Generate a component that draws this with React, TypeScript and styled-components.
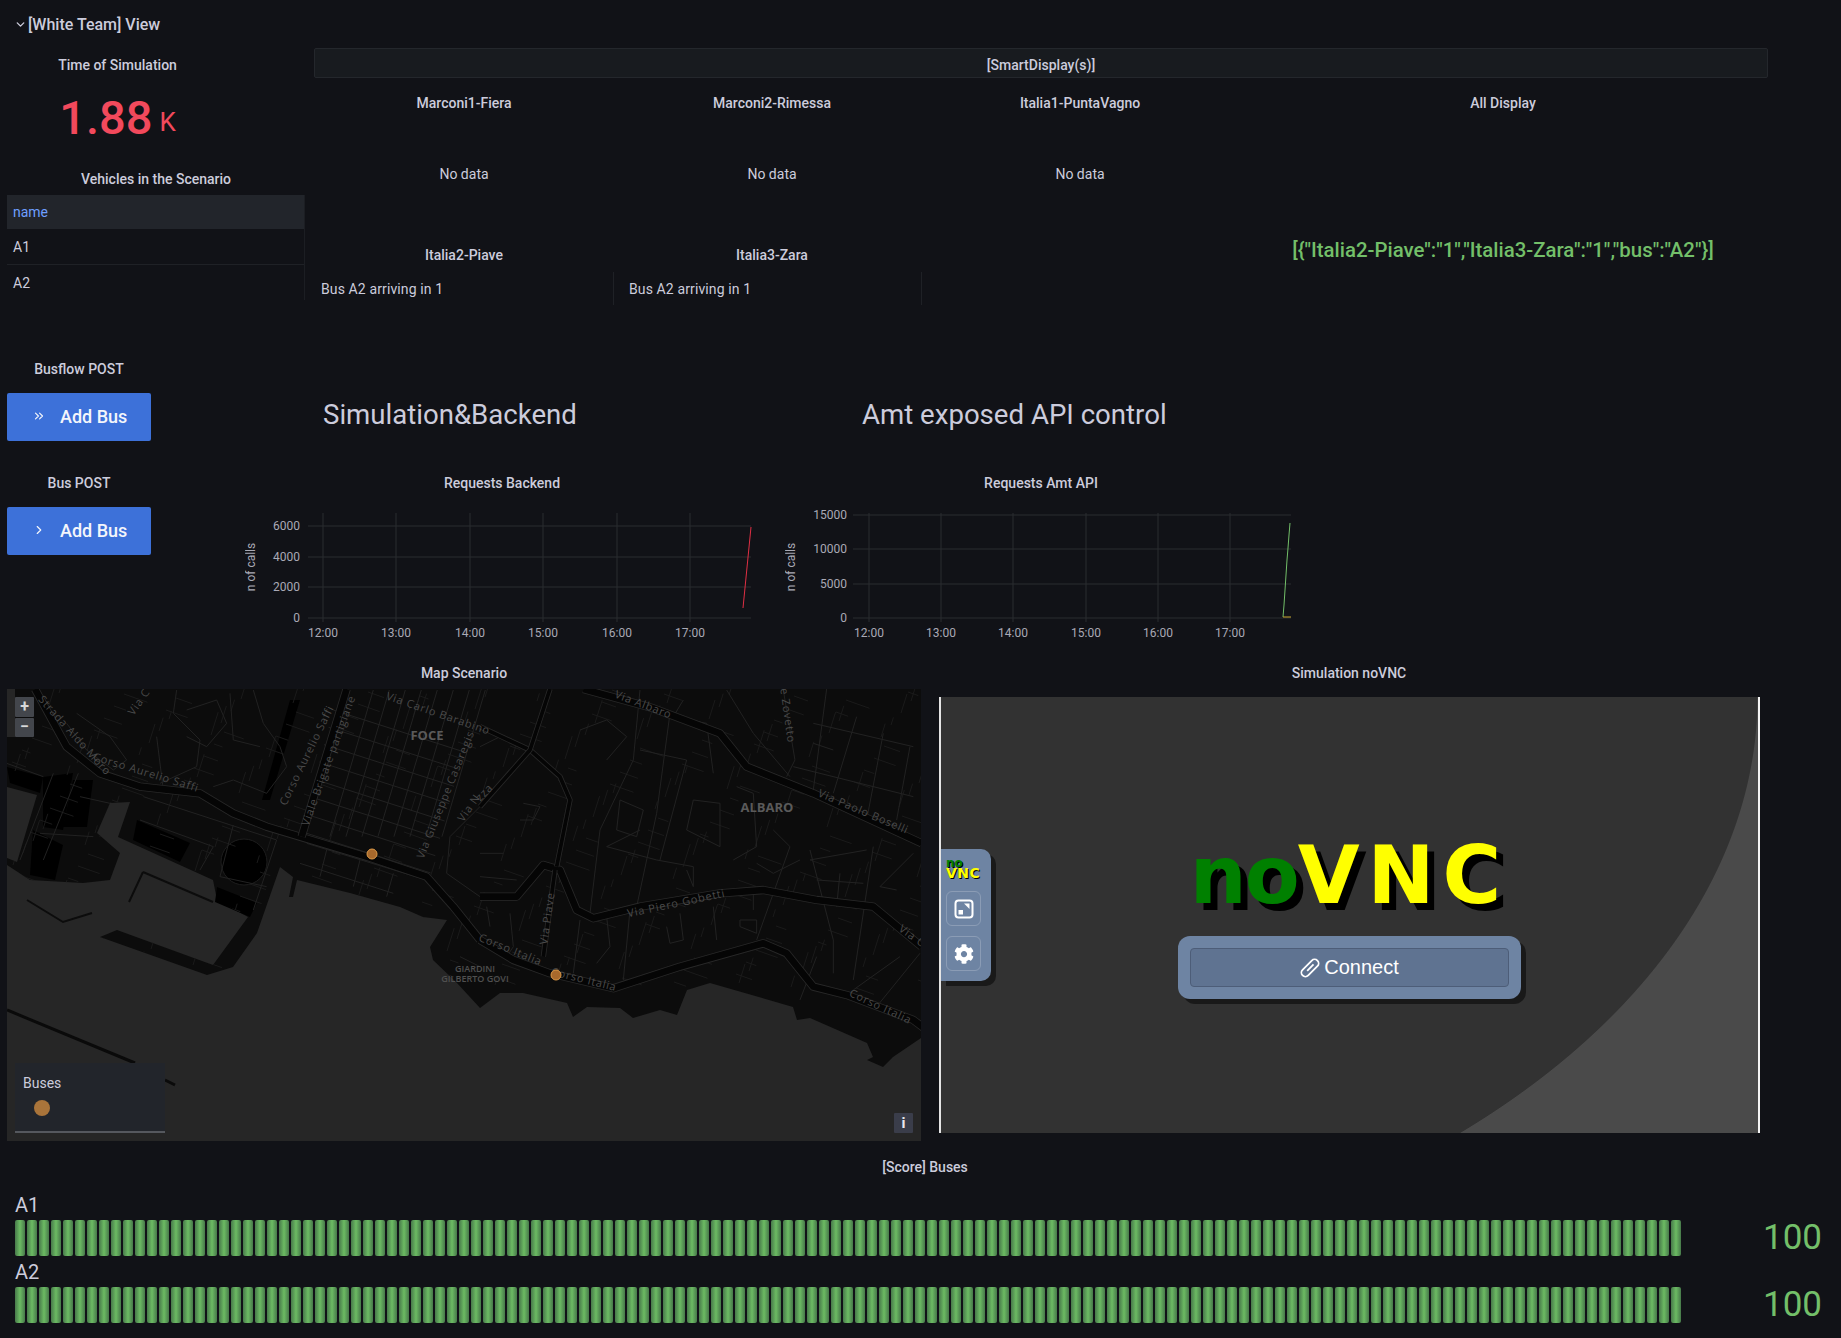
import React from "react";
import styled, { createGlobalStyle } from "styled-components";
import { ChevronDown, ChevronRight, ChevronsRight } from "lucide-react";
import { FaCog } from "react-icons/fa";

const GlobalStyle = createGlobalStyle`
  html, body {
    margin: 0;
    padding: 0;
    background: #111217;
  }
  * {
    box-sizing: border-box;
  }
`;

const Page = styled.div`
  width: 1841px;
  height: 1338px;
  overflow: hidden;
  background: #111217;
  color: #ccccdc;
  font-family: Roboto, "Liberation Sans", sans-serif;
  font-size: 14px;
`;

const RowHeader = styled.div`
  height: 48px;
  padding-left: 14px;
  display: flex;
  align-items: center;
  font-size: 16px;
  font-weight: 500;
  & > svg {
    margin-right: 1px;
  }
`;

const PanelTitle = styled.div`
  height: 34px;
  display: flex;
  align-items: center;
  justify-content: center;
  font-weight: 500;
  font-size: 14px;
  white-space: nowrap;
`;

const TopSection = styled.div`
  height: 297px;
  padding-left: 7px;
  display: grid;
  grid-template-columns: 298px 1454px;
  column-gap: 9px;
`;

const TimePanel = styled.div`
  width: 221px;
  height: 114px;
`;

const StatValue = styled.div`
  height: 70px;
  display: flex;
  align-items: center;
  justify-content: center;
  gap: 7px;
  color: #f2495c;
  font-size: 47px;
  font-weight: 500;
`;

const StatUnit = styled.span`
  font-size: 26px;
  font-weight: 400;
  margin-top: 10px;
`;

const Table = styled.div`
  margin-top: -1px;
  border-right: 1px solid #1c1e23;
`;

const TableHead = styled.div`
  height: 34px;
  padding-left: 6px;
  display: flex;
  align-items: center;
  background: #22252b;
  color: #6e9fff;
`;

const TableRow = styled.div<{ $line?: boolean }>`
  height: ${(p) => (p.$line ? 36 : 35)}px;
  padding-left: 6px;
  display: flex;
  align-items: center;
  border-bottom: ${(p) => (p.$line ? "1px solid #1f2126" : "none")};
`;

const SmartBar = styled.div`
  height: 30px;
  padding-top: 3px;
  display: flex;
  align-items: center;
  justify-content: center;
  background: #181b1f;
  border: 1px solid #24272c;
  border-radius: 2px;
  font-weight: 500;
`;

const DisplayGrid = styled.div`
  margin-top: 8px;
  display: grid;
  grid-template-columns: 300px 300px 300px 530px;
  grid-template-rows: 152px 67px;
  column-gap: 8px;
`;

const DisplayPanel = styled.div`
  display: flex;
  flex-direction: column;
`;

const AllDisplayPanel = styled(DisplayPanel)`
  grid-column: 4;
  grid-row: 1 / span 2;
`;

const NoData = styled.div`
  height: 108px;
  display: flex;
  align-items: center;
  justify-content: center;
`;

const DisplayRow = styled.div`
  height: 33px;
  padding-left: 7px;
  display: flex;
  align-items: center;
  border-right: 1px solid #1f2126;
  letter-spacing: 0.12px;
`;

const JsonValue = styled.div`
  margin-top: 118px;
  text-align: center;
  color: #73bf69;
  font-size: 20.4px;
  font-weight: 500;
  white-space: nowrap;
`;

const MiddleSection = styled.div`
  height: 311px;
  padding-left: 7px;
  display: flex;
`;

const ButtonColumn = styled.div`
  width: 144px;
  padding-top: 7px;
`;

const ActionButton = styled.button`
  width: 144px;
  height: 48px;
  margin: 7px 0 25px;
  padding: 0 0 2px 25px;
  display: flex;
  align-items: center;
  gap: 14px;
  border: none;
  border-radius: 2px;
  background: #3d71d9;
  color: #f4f6fb;
  font-family: inherit;
  font-size: 18px;
  font-weight: 500;
`;

const ChartColumn = styled.div<{ $width: number; $gap: number; $indent: number }>`
  width: ${(p) => p.$width}px;
  margin-left: ${(p) => p.$gap}px;
  padding-top: 49px;
  & > h2 {
    height: 40px;
    margin: 0 0 32px;
    padding-left: ${(p) => p.$indent}px;
    display: flex;
    align-items: center;
    font-size: 27.6px;
    font-weight: 400;
    white-space: nowrap;
  }
`;

const ChartSvg = styled.svg`
  display: block;
  width: 100%;
  height: 140px;
  font-family: Roboto, sans-serif;
  font-size: 12px;
  fill: #a9a9b5;
`;

const ViewSection = styled.div`
  height: 494px;
  padding-left: 7px;
  display: flex;
  column-gap: 8px;
`;

const MapPanel = styled.div`
  width: 914px;
`;

const MapCanvas = styled.div`
  position: relative;
  height: 452px;
  margin-top: -1px;
  background: #262626;
  overflow: hidden;
`;

const MapSvg = styled.svg`
  display: block;
  width: 914px;
  height: 452px;
  font-family: "Open Sans", sans-serif;
  font-size: 11px;
  fill: #4a4a4a;
`;

const ZoomControl = styled.div`
  position: absolute;
  left: 8px;
  top: 8px;
  width: 19px;
  height: 40px;
  display: flex;
  flex-direction: column;
  gap: 1px;
`;

const ZoomButton = styled.div`
  flex: 1;
  display: flex;
  align-items: center;
  justify-content: center;
  background: #43464c;
  color: #d8d9da;
  font-size: 16px;
  font-weight: 700;
  line-height: 1;
  border-radius: 1px;
`;

const Legend = styled.div`
  position: absolute;
  left: 8px;
  top: 374px;
  width: 150px;
  height: 70px;
  padding: 12px 8px 0;
  background: #22252b;
  border-bottom: 2px solid #55585e;
`;

const LegendDot = styled.div`
  width: 16px;
  height: 16px;
  margin: 9px 0 0 11px;
  border-radius: 50%;
  background: #a9743a;
`;

const InfoButton = styled.div`
  position: absolute;
  right: 8px;
  bottom: 8px;
  width: 19px;
  height: 20px;
  display: flex;
  align-items: center;
  justify-content: center;
  background: #3a3d4a;
  color: #e8e8ef;
  font-size: 15px;
  font-weight: 700;
  border-radius: 1px;
`;

const VncPanel = styled.div`
  width: 840px;
`;

const VncFrame = styled.div`
  position: relative;
  width: 821px;
  height: 436px;
  margin: 7px 0 0 10px;
  padding-top: 139px;
  display: flex;
  flex-direction: column;
  align-items: center;
  border-left: 2px solid #e4e4e4;
  border-right: 2px solid #f4f4f4;
  background: radial-gradient(
    ellipse 957px 602px at -140px 0,
    #323232 calc(100% - 1px),
    #4a4a4a 100%
  );
`;

const ControlBar = styled.div`
  position: absolute;
  left: 0;
  top: 152px;
  width: 50px;
  height: 132px;
  padding: 8px 0 0 5px;
  display: flex;
  flex-direction: column;
  background: #6e84a3;
  border-radius: 0 10px 10px 0;
  box-shadow: 5px 5px 0 rgba(0, 0, 0, 0.5);
`;

const ToolButton = styled.div`
  width: 35px;
  height: 35px;
  margin-bottom: 10px;
  display: flex;
  align-items: center;
  justify-content: center;
  border: 1px solid rgba(255, 255, 255, 0.2);
  border-radius: 6px;
  color: #fff;
`;

const LogoText = styled.div`
  display: flex;
  font-family: "DejaVu Sans", sans-serif;
  font-weight: 700;
  line-height: 1;
  font-size: 80px;
  height: 76px;
  text-shadow: 7px 7px 0 #000;
`;

const MiniLogo = styled.div`
  height: 23px;
  margin-bottom: 11px;
  font-family: "DejaVu Sans", sans-serif;
  font-weight: 700;
  line-height: 10px;
  font-size: 14px;
  text-shadow: 1px 1px 0 #000;
`;

const LogoPart = styled.span<{ $color: string; $spacing: number; $size?: number }>`
  color: ${(p) => p.$color};
  letter-spacing: ${(p) => p.$spacing}px;
  font-size: ${(p) => (p.$size ? `${p.$size}px` : "inherit")};
`;

const ConnectCard = styled.div`
  width: 343px;
  height: 63px;
  margin-top: 24px;
  padding: 12px;
  background: #6e84a3;
  border-radius: 12px;
  box-shadow: 5px 5px 0 rgba(0, 0, 0, 0.5);
`;

const ConnectButton = styled.div`
  height: 39px;
  display: flex;
  align-items: center;
  justify-content: center;
  gap: 4px;
  background: #5f7391;
  border: 1px solid #4d5d78;
  border-radius: 4px;
  color: #fff;
  font-family: "Liberation Sans", Arial, sans-serif;
  font-size: 20px;
`;

const ScoreSection = styled.div`
  padding-left: 9px;
`;

const GaugeList = styled.div`
  margin-top: 9px;
  padding-left: 6px;
  display: flex;
  flex-direction: column;
  gap: 4px;
`;

const GaugeRow = styled.div`
  display: grid;
  grid-template-columns: 1666px 141px;
  grid-template-rows: 27px 36px;
`;

const GaugeLabel = styled.div`
  grid-column: 1;
  font-size: 20px;
  line-height: 24px;
`;

const GaugeBar = styled.div`
  grid-column: 1;
  display: flex;
  gap: 2px;
`;

const GaugeCell = styled.div`
  width: 10px;
  flex: none;
  border-radius: 2px;
  background: linear-gradient(90deg, #47794a, #6cbb63 50%, #47794a);
`;

const GaugeValue = styled.div`
  grid-column: 2;
  grid-row: 2;
  padding-bottom: 2px;
  display: flex;
  align-items: center;
  justify-content: flex-end;
  color: #73bf69;
  font-size: 35px;
`;

type ChartProps = {
  viewBox: string;
  hLines: { y: number; label: string }[];
  vLines: number[];
  left: number;
  right: number;
  labelX: number;
  tickX: number;
  children: React.ReactNode;
};

const hours = ["12:00", "13:00", "14:00", "15:00", "16:00", "17:00"];

const Chart = ({ viewBox, hLines, vLines, left, right, labelX, tickX, children }: ChartProps) => (
  <ChartSvg viewBox={viewBox}>
    {hLines.map((l) => (
      <g key={l.label}>
        <line x1={left} x2={right} y1={l.y} y2={l.y} stroke="#2a2c31" />
        <text x={tickX} y={l.y + 4} textAnchor="end">
          {l.label}
        </text>
      </g>
    ))}
    {vLines.map((x, i) => (
      <g key={x}>
        <line x1={x} x2={x} y1={513} y2={622} stroke="#2a2c31" />
        <text x={x} y={637} textAnchor="middle">
          {hours[i]}
        </text>
      </g>
    ))}
    <text transform={`translate(${labelX} 567) rotate(-90)`} textAnchor="middle">
      n of calls
    </text>
    {children}
  </ChartSvg>
);

const land =
  "M7 689 L921 689 L921 1038 L893 1057 L883 1067 L867 1060 L873 1057 L867 1043 L810 1018 L797 1020 L793 1007 L710 983 L687 990 L677 1015 L660 1010 L633 1018 L620 1008 L587 1007 L573 1017 L567 1003 L523 993 L500 993 L480 1008 L457 983 L433 960 L430 947 L447 920 L423 917 L400 907 L350 893 L297 880 L293 897 L289 897 L293 877 L280 867 L257 933 L233 967 L207 975 L100 937 L117 930 L213 965 L248 917 L217 900 L213 880 L118 837 L130 802 L110 803 L97 833 L120 853 L110 880 L83 883 L30 880 L7 865 L7 858 L17 862 L37 795 L7 787 Z";

const blocks = [
  "M137 820 L190 843 L180 862 L133 840 Z",
  "M217 887 L257 903 L250 917 L215 902 Z",
  "M43 777 L73 773 L63 830 L43 827 Z",
  "M73 780 L93 780 L87 827 L63 827 Z",
  "M7 767 L43 777 L40 793 L10 783 Z",
  "M33 830 L63 845 L55 880 L30 875 Z",
  "M290 700 L300 700 L270 800 L262 800 Z",
];

const minorLeft = [
  "M230 100 L330 170 L380 240 L340 270 L260 210 L200 130",
  "M470 170 L490 330",
  "M530 30 L520 100 L600 180 L590 260 L480 310",
  "M640 320 L700 300 L800 340 L860 260 L840 200 L790 130 L760 30",
  "M690 40 L700 180 L780 200",
  "M560 90 L650 60 L680 130 L620 200 L560 170",
  "M430 350 L830 480 L760 690",
  "M420 420 L640 500 L600 570",
  "M700 435 L660 590 L800 620",
  "M235 280 L130 540",
  "M160 280 L60 540",
  "M240 350 L330 370 L300 470",
  "M20 250 L130 290",
  "M120 460 L280 470",
  "M920 490 L1280 600",
  "M900 550 L1180 640",
  "M980 510 L960 590",
  "M1080 540 L1060 620",
  "M1180 580 L1160 650",
  "M1440 380 L1350 470 L1340 580 L1440 650",
  "M1380 830 L1440 860",
];

const minorRight = [
  "M0 200 L60 170 L130 200",
  "M300 150 L380 120 L440 170 L380 240",
  "M480 30 L460 240 L360 450 L330 700",
  "M570 100 L530 400 L470 680",
  "M610 60 L580 110 L680 130 L700 280",
  "M480 210 L620 240 L540 540",
  "M420 360 L490 390 L470 470 L410 450 Z",
  "M380 500 L530 540 L640 560 L640 620 L620 570",
  "M640 360 L720 370 L720 500 L620 450 L640 360",
  "M770 320 L820 340 L830 500 L760 540",
  "M740 30 L820 160 L930 290",
  "M910 30 L945 240 L920 290",
  "M1000 130 L1300 200",
  "M1040 27 L1000 330",
  "M1130 110 L1060 340",
  "M1210 160 L1160 420",
  "M1290 200 L1250 420",
  "M940 260 L1300 350",
  "M1000 190 L1060 210",
  "M880 450 L930 500 L830 780",
  "M990 510 L1060 780 L1060 880",
  "M990 540 L1160 510",
  "M1010 600 L1150 610",
  "M1080 580 L1070 680",
  "M1180 500 L1120 900",
  "M1300 520 L1200 620 L1250 630",
  "M830 550 L880 580 L960 540",
  "M780 720 L830 720 L830 760 L780 740 Z",
  "M820 640 L820 690",
  "M700 680 L710 780",
  "M1320 820 L1190 980",
  "M1260 830 L1120 930",
  "M600 700 L610 780 L570 790 L560 740",
  "M380 710 L390 800 L350 850",
  "M450 690 L430 900",
  "M300 720 L280 880",
  "M20 680 L30 740",
  "M90 700 L100 800 L80 830",
  "M0 520 L70 520",
  "M0 590 L110 600",
  "M130 370 L180 380 L160 420 L120 420",
  "M380 500 L480 450",
  "M960 960 L1010 830",
];

const gridLines = Array.from({ length: 8 }, (_, i) => 90 + i * 52);

// street fabric, a fixed pseudo random scatter over the land
const fabric = Array.from({ length: 420 }, (_, i) => {
  const x = 7 + ((i * 733) % 914);
  const y = 689 + ((i * 397) % 300);
  const len = 8 + ((i * 13) % 18);
  const steep = i % 2 === 0;
  const dx = steep ? len * 0.3 : len * 0.94;
  const dy = steep ? -len * 0.95 : len * 0.33;
  return `M${x} ${y} l${dx.toFixed(1)} ${dy.toFixed(1)}`;
}).join(" ");

const mapLabels = [
  { text: "Strada Aldo Moro", x: 72, y: 738, r: 48 },
  { text: "Corso Aurelio Saffi", x: 145, y: 776, r: 17 },
  { text: "Via C", x: 142, y: 704, r: -55 },
  { text: "Via Carlo Barabino", x: 437, y: 717, r: 19 },
  { text: "Corso Aurelio Saffi", x: 310, y: 757, r: -64 },
  { text: "Viale Brigate partigiane", x: 332, y: 762, r: -70 },
  { text: "Via Giuseppe Casaregis", x: 449, y: 796, r: -68 },
  { text: "Via N", x: 472, y: 810, r: -55 },
  { text: "zza", x: 487, y: 795, r: -45 },
  { text: "Via Albaro", x: 642, y: 708, r: 21 },
  { text: "Via Paolo Boselli", x: 862, y: 815, r: 23 },
  { text: "e Zovetto", x: 784, y: 716, r: 82 },
  { text: "Via Piero Gobetti", x: 677, y: 907, r: -12 },
  { text: "Via Piave", x: 551, y: 919, r: -82 },
  { text: "Corso Italia", x: 509, y: 953, r: 22 },
  { text: "Corso Italia", x: 583, y: 983, r: 14 },
  { text: "Corso Italia", x: 879, y: 1010, r: 25 },
  { text: "Via C", x: 910, y: 939, r: 35 },
];

const MajorRoad = ({ d, thin }: { d: string; thin?: boolean }) => (
  <>
    <path d={d} fill="none" stroke="#282828" strokeWidth={thin ? 16 : 25} strokeLinejoin="round" />
    <path d={d} fill="none" stroke="#050505" strokeWidth={thin ? 11 : 20} strokeLinejoin="round" />
  </>
);

const MapDrawing = () => (
  <MapSvg viewBox="7 689 914 452">
    <defs>
      <clipPath id="land-clip">
        <path d={land} />
      </clipPath>
    </defs>
    <path d={land} fill="#0c0c0c" />
    <rect x={7} y={689} width={8} height={48} fill="#262626" />
    <path d="M143 872 L129 902" stroke="#0c0c0c" strokeWidth={2} />
    <path d="M143 872 L213 902" stroke="#0c0c0c" strokeWidth={2} />
    <path d="M27 900 L63 922 L92 913" stroke="#0c0c0c" strokeWidth={2} fill="none" />
    <path d="M7 1010 L135 1063 M165 1080 L175 1085" stroke="#0a0a0a" strokeWidth={3} />
    {blocks.map((d) => (
      <path key={d} d={d} fill="#000" />
    ))}
    <circle cx={244} cy={862} r={23} fill="#000" stroke="#1d1d1d" />
    <g clipPath="url(#land-clip)">
      <path d={fabric} fill="none" stroke="#1b1b1b" />
      <g transform="translate(0 680) scale(0.3333)" fill="none" stroke="#222" strokeWidth={3}>
        {minorLeft.map((d) => (
          <path key={d} d={d} />
        ))}
        {gridLines.map((y, i) => (
          <path key={y} d={`M${1000 - i * 14} ${y} L${1390 - i * 14} ${y + 125}`} />
        ))}
        {gridLines.map((y, i) => (
          <path key={y} d={`M${1120 + i * 48} 30 L${990 + i * 48} 470`} />
        ))}
      </g>
      <g transform="translate(480 680) scale(0.3333)" fill="none" stroke="#222" strokeWidth={3}>
        {minorRight.map((d) => (
          <path key={d} d={d} />
        ))}
      </g>
    </g>
    <g transform="translate(0 680) scale(0.3333)">
      <MajorRoad d="M105 27 L200 200 L300 280 L420 320 L600 340 L700 400 L800 440 L900 470 L1100 530 L1280 590 L1360 680 L1440 780" />
      <MajorRoad d="M1040 27 L905 470" />
    </g>
    <g transform="translate(480 680) scale(0.3333)">
      <MajorRoad d="M0 780 L100 840 L210 880 L400 925 L600 860 L850 790 L920 820 L1000 920 L1100 945 L1300 1020 L1340 1050" />
      <MajorRoad d="M310 27 L520 85 L720 160 L800 260 L1000 340 L1325 490" />
      <MajorRoad d="M0 650 L110 650 L190 555 L240 570 L290 690 L340 715 L480 680 L720 640 L850 630 L1010 660 L1180 680 L1325 800" />
      <MajorRoad thin d="M0 140 L150 210 L240 290 L270 360 L230 560" />
      <MajorRoad thin d="M210 27 L150 210 L0 380" />
      <MajorRoad thin d="M225 570 L190 830" />
    </g>
    {mapLabels.map((l) => (
      <text
        key={l.text + l.x}
        textAnchor="middle"
        letterSpacing="0.8"
        transform={`translate(${l.x} ${l.y}) rotate(${l.r})`}
      >
        {l.text}
      </text>
    ))}
    <text x={427} y={740} textAnchor="middle" fontSize={13} fontWeight={700} fill="#5a5a5a">
      FOCE
    </text>
    <text x={767} y={812} textAnchor="middle" fontSize={13} fontWeight={700} fill="#5a5a5a">
      ALBARO
    </text>
    <text x={475} y={972} textAnchor="middle" fontSize={9} fontWeight={600} fill="#4f4f4f">
      GIARDINI
    </text>
    <text x={475} y={982} textAnchor="middle" fontSize={9} fontWeight={600} fill="#4f4f4f">
      GILBERTO GOVI
    </text>
    <circle cx={372} cy={854} r={5} fill="#a8692c" stroke="#dd9a48" />
    <circle cx={556} cy={975} r={5} fill="#a8692c" stroke="#dd9a48" />
  </MapSvg>
);

const ResizeIcon = () => (
  <svg width="20" height="20" viewBox="0 0 20 20">
    <rect x="1.5" y="1.5" width="17" height="17" rx="3" fill="none" stroke="#fff" strokeWidth="2" />
    <path d="M10 4.5 H15.5 V10 Z" fill="#fff" />
    <rect x="4.5" y="11" width="4.5" height="4.5" fill="#fff" />
  </svg>
);

const LinkIcon = () => (
  <svg width="20" height="22" viewBox="0 0 20 22">
    <g transform="rotate(45 10 11)" fill="none" stroke="#fff" strokeWidth="1.8">
      <rect x="6" y="0.5" width="8" height="21" rx="4" />
      <path d="M10 6 V15" />
    </g>
  </svg>
);

const Gauge = ({ label }: { label: string }) => (
  <GaugeRow>
    <GaugeLabel>{label}</GaugeLabel>
    <GaugeBar>
      {Array.from({ length: 139 }, (_, i) => (
        <GaugeCell key={i} />
      ))}
    </GaugeBar>
    <GaugeValue>100</GaugeValue>
  </GaugeRow>
);

const App = () => {
  return (
    <Page>
      <GlobalStyle />
      <RowHeader>
        <ChevronDown size={13} strokeWidth={2.5} />
        [White Team] View
      </RowHeader>

      <TopSection>
        <div>
          <TimePanel>
            <PanelTitle>Time of Simulation</PanelTitle>
            <StatValue>
              1.88
              <StatUnit>K</StatUnit>
            </StatValue>
          </TimePanel>
          <PanelTitle>Vehicles in the Scenario</PanelTitle>
          <Table>
            <TableHead>name</TableHead>
            <TableRow $line>A1</TableRow>
            <TableRow>A2</TableRow>
          </Table>
        </div>

        <div>
          <SmartBar>[SmartDisplay(s)]</SmartBar>
          <DisplayGrid>
            <DisplayPanel>
              <PanelTitle>Marconi1-Fiera</PanelTitle>
              <NoData>No data</NoData>
            </DisplayPanel>
            <DisplayPanel>
              <PanelTitle>Marconi2-Rimessa</PanelTitle>
              <NoData>No data</NoData>
            </DisplayPanel>
            <DisplayPanel>
              <PanelTitle>Italia1-PuntaVagno</PanelTitle>
              <NoData>No data</NoData>
            </DisplayPanel>
            <AllDisplayPanel>
              <PanelTitle>All Display</PanelTitle>
              <JsonValue>{'[{"Italia2-Piave":"1","Italia3-Zara":"1","bus":"A2"}]'}</JsonValue>
            </AllDisplayPanel>
            <DisplayPanel>
              <PanelTitle>Italia2-Piave</PanelTitle>
              <DisplayRow>Bus A2 arriving in 1</DisplayRow>
            </DisplayPanel>
            <DisplayPanel>
              <PanelTitle>Italia3-Zara</PanelTitle>
              <DisplayRow>Bus A2 arriving in 1</DisplayRow>
            </DisplayPanel>
          </DisplayGrid>
        </div>
      </TopSection>

      <MiddleSection>
        <ButtonColumn>
          <PanelTitle>Busflow POST</PanelTitle>
          <ActionButton>
            <ChevronsRight size={14} strokeWidth={2} />
            Add Bus
          </ActionButton>
          <PanelTitle>Bus POST</PanelTitle>
          <ActionButton>
            <ChevronRight size={14} strokeWidth={2} />
            Add Bus
          </ActionButton>
        </ButtonColumn>

        <ChartColumn $width={514} $gap={94} $indent={78}>
          <h2>Simulation&amp;Backend</h2>
          <PanelTitle>Requests Backend</PanelTitle>
          <Chart
            viewBox="245 500 514 140"
            hLines={[
              { y: 526, label: "6000" },
              { y: 557, label: "4000" },
              { y: 587, label: "2000" },
              { y: 618, label: "0" },
            ]}
            vLines={[323, 396, 470, 543, 617, 690]}
            left={308}
            right={751}
            labelX={255}
            tickX={300}
          >
            <path d="M743 608 L751 527" stroke="#e02f44" fill="none" />
          </Chart>
        </ChartColumn>

        <ChartColumn $width={512} $gap={26} $indent={77}>
          <h2>Amt exposed API control</h2>
          <PanelTitle>Requests Amt API</PanelTitle>
          <Chart
            viewBox="785 500 512 140"
            hLines={[
              { y: 515, label: "15000" },
              { y: 549, label: "10000" },
              { y: 584, label: "5000" },
              { y: 618, label: "0" },
            ]}
            vLines={[869, 941, 1013, 1086, 1158, 1230]}
            left={853}
            right={1291}
            labelX={795}
            tickX={847}
          >
            <path d="M1283 617 L1284 605 L1285 590 L1286 575 L1287 560 L1288 548 L1289 535 L1290 523" stroke="#73bf69" fill="none" />
            <path d="M1283 617 L1291 617" stroke="#c9a830" fill="none" />
          </Chart>
        </ChartColumn>
      </MiddleSection>

      <ViewSection>
        <MapPanel>
          <PanelTitle>Map Scenario</PanelTitle>
          <MapCanvas>
            <MapDrawing />
            <ZoomControl>
              <ZoomButton>+</ZoomButton>
              <ZoomButton>−</ZoomButton>
            </ZoomControl>
            <Legend>
              Buses
              <LegendDot />
            </Legend>
            <InfoButton>i</InfoButton>
          </MapCanvas>
        </MapPanel>

        <VncPanel>
          <PanelTitle>Simulation noVNC</PanelTitle>
          <VncFrame>
            <ControlBar>
              <MiniLogo>
                <LogoPart $color="#008000" $spacing={0} $size={12}>no</LogoPart>
                <br />
                <LogoPart $color="#ffff00" $spacing={0.5}>VNC</LogoPart>
              </MiniLogo>
              <ToolButton>
                <ResizeIcon />
              </ToolButton>
              <ToolButton>
                <FaCog size={20} />
              </ToolButton>
            </ControlBar>
            <LogoText>
              <LogoPart $color="#008000" $spacing={-2}>no</LogoPart>
              <LogoPart $color="#ffff00" $spacing={8}>VNC</LogoPart>
            </LogoText>
            <ConnectCard>
              <ConnectButton>
                <LinkIcon />
                Connect
              </ConnectButton>
            </ConnectCard>
          </VncFrame>
        </VncPanel>
      </ViewSection>

      <ScoreSection>
        <PanelTitle>[Score] Buses</PanelTitle>
        <GaugeList>
          <Gauge label="A1" />
          <Gauge label="A2" />
        </GaugeList>
      </ScoreSection>
    </Page>
  );
};

export default App;
